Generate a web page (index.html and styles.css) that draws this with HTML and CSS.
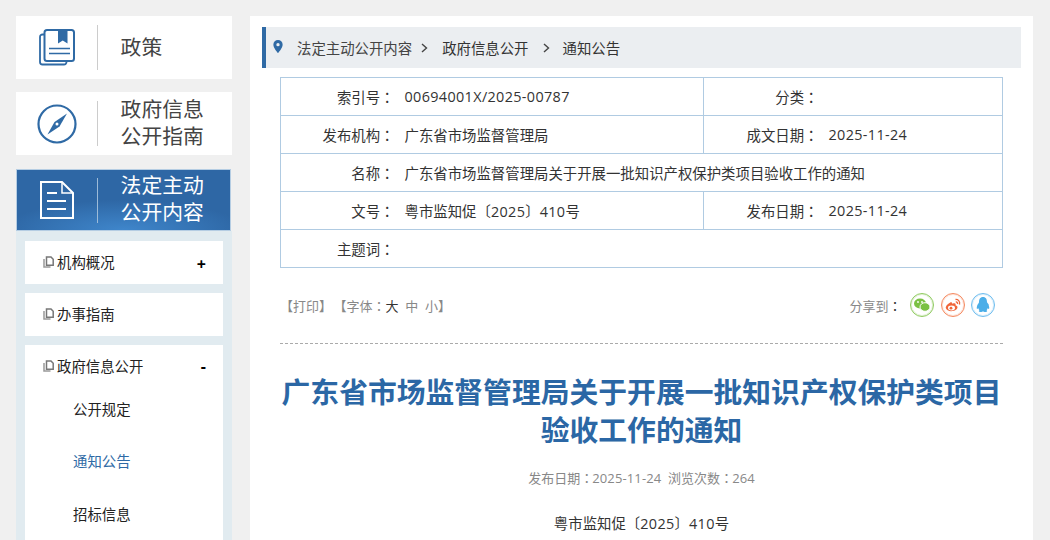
FILE: index.html
```html
<!DOCTYPE html>
<html lang="zh-CN">
<head>
<meta charset="utf-8">
<title>通知公告</title>
<link rel="stylesheet" href="styles.css">
</head>
<body>
<div class="page">
  <aside class="side">
    <a class="tab">
      <span class="tab-icon">
        <svg width="38" height="38" viewBox="0 0 38 38" fill="none" stroke="#2f6aa5" stroke-width="1.800"><path d="M6 5.500H4.500A2.500 2.500 0 0 0 2 8v25a2.500 2.500 0 0 0 2.500 2.500H26a2.500 2.500 0 0 0 2.500-2.500"/><rect x="6.500" y="1" width="29.500" height="31" rx="2.500" stroke-width="2"/><path d="M20 1h9.500v13.500l-4.750-3-4.750 3z" fill="#2f6aa5" stroke="none"/><path d="M11 19.500h21M11 24.500h21" stroke-width="1.500"/></svg>
      </span>
      <span class="tab-text">政策</span>
    </a>
    <a class="tab">
      <span class="tab-icon">
        <svg width="40" height="40" viewBox="0 0 40 40" fill="none"><circle cx="20" cy="20" r="18.500" stroke="#2f6aa5" stroke-width="2.200"/><path d="M30 9.500 22.500 22.500 10.500 30.500 17.500 18z" fill="#2f6aa5"/><circle cx="20" cy="20" r="1.500" fill="#fff"/></svg>
      </span>
      <span class="tab-text">政府信息<br>公开指南</span>
    </a>
    <a class="tab tab-on">
      <span class="tab-icon">
        <svg width="34" height="38" viewBox="0 0 34 38" fill="none" stroke="#fff" stroke-width="2"><path d="M1 1h21l11 11v25H1z"/><path d="M22 1v11h11" stroke-width="1.500"/><path d="M7 12h10M7 20h19M7 28h19" stroke-width="2.200"/></svg>
      </span>
      <span class="tab-text">法定主动<br>公开内容</span>
    </a>
    <div class="menu">
      <div class="menu-item">
        <svg class="doc" width="11" height="12" viewBox="0 0 11 12" fill="none" stroke="#777" stroke-width="1.500"><path d="M3.500 1h4.500l2.200 2.200v6H3.500z"/><path d="M1 3v8h6.500" stroke="#999"/></svg>
        <span class="menu-label">机构概况</span><b class="sign sign-plus">+</b>
      </div>
      <div class="menu-item">
        <svg class="doc" width="11" height="12" viewBox="0 0 11 12" fill="none" stroke="#777" stroke-width="1.500"><path d="M3.500 1h4.500l2.200 2.200v6H3.500z"/><path d="M1 3v8h6.500" stroke="#999"/></svg>
        <span class="menu-label">办事指南</span>
      </div>
      <div class="menu-open">
        <div class="menu-item menu-head">
          <svg class="doc" width="11" height="12" viewBox="0 0 11 12" fill="none" stroke="#777" stroke-width="1.500"><path d="M3.500 1h4.500l2.200 2.200v6H3.500z"/><path d="M1 3v8h6.500" stroke="#999"/></svg>
          <span class="menu-label">政府信息公开</span><b class="sign">-</b>
        </div>
        <a class="sub">公开规定</a>
        <a class="sub sub-on">通知公告</a>
        <a class="sub">招标信息</a>
      </div>
    </div>
  </aside>
  <main class="main">
    <nav class="crumb">
      <svg class="pin" width="10" height="13" viewBox="0 0 10 14"><path fill-rule="evenodd" fill="#2f6aa5" d="M5 0a5 5 0 0 1 5 5c0 3.500-5 9-5 9S0 8.500 0 5a5 5 0 0 1 5-5zm0 3.200a1.800 1.800 0 1 0 0 3.600 1.800 1.800 0 0 0 0-3.600z"/></svg>
      <span class="crumb-first">法定主动公开内容</span>
      <svg class="chev" width="7" height="10" viewBox="0 0 7 10" fill="none" stroke="#444" stroke-width="1.400"><path d="M1 1l4.500 4L1 9"/></svg>
      <span class="crumb-second">政府信息公开</span>
      <svg class="chev chev-last" width="7" height="10" viewBox="0 0 7 10" fill="none" stroke="#444" stroke-width="1.400"><path d="M1 1l4.500 4L1 9"/></svg>
      <span class="crumb-last">通知公告</span>
    </nav>
    <div class="article">
      <table class="meta">
        <colgroup><col class="c1"><col class="c2"><col class="c3"><col class="c4"></colgroup>
        <tr><th>索引号<span class="pct">：</span></th><td><span class="num">00694001X/2025-00787</span></td><th>分类<span class="pct">：</span></th><td></td></tr>
        <tr><th>发布机构<span class="pct">：</span></th><td>广东省市场监督管理局</td><th>成文日期<span class="pct">：</span></th><td><span class="num">2025-11-24</span></td></tr>
        <tr><th>名称<span class="pct">：</span></th><td colspan="3">广东省市场监督管理局关于开展一批知识产权保护类项目验收工作的通知</td></tr>
        <tr><th>文号<span class="pct">：</span></th><td>粤市监知促<span class="pct">〔</span><span class="num">2025</span><span class="pct">〕</span><span class="num">410</span>号</td><th>发布日期<span class="pct">：</span></th><td><span class="num">2025-11-24</span></td></tr>
        <tr><th>主题词<span class="pct">：</span></th><td colspan="3"></td></tr>
      </table>
      <div class="tools">
        <div class="tools-left">【打印】 <span class="font-tool">【字体<span class="pct">：</span><span class="dark">大</span>&nbsp; 中&nbsp; 小】</span></div>
        <div class="share">
          <span class="share-label">分享到<span class="pct dark">：</span></span>
          <span class="round round-green"><svg width="16" height="14" viewBox="0 0 16 14"><ellipse cx="6" cy="5.500" rx="6" ry="5" fill="#7ac143"/><ellipse cx="11" cy="9" rx="5" ry="4.300" fill="#7ac143" stroke="#fff" stroke-width="1"/><circle cx="4" cy="4" r=".9" fill="#fff"/><circle cx="8" cy="4" r=".9" fill="#fff"/></svg></span>
          <span class="round round-red"><svg width="16" height="14" viewBox="0 0 16 14" fill="none"><path d="M6.500 4C3 5.500.5 8 .8 10c.4 2.500 4 3.500 7 3 3-.5 5-2.300 4.700-4-.2-1.300-1.600-1.500-2-1.700.5-1.500-.2-2.500-2-2-.7.200-1.500.5-1.500.5s.3-1.800-1.500-1.800z" fill="#f0653a"/><ellipse cx="6.500" cy="10" rx="3.500" ry="2.400" fill="#fff"/><circle cx="6" cy="10.200" r="1.400" fill="#f0653a"/><path d="M10.500 1.500c2.500-.3 4.800 1.800 4 5M10.800 4c1.200-.2 2 .8 1.700 2" stroke="#f0653a" stroke-width="1.300"/></svg></span>
          <span class="round round-blue"><svg width="14" height="16" viewBox="0 0 14 16"><path d="M7 0C4 0 3 2.500 3 5c0 1-1 1.500-1.800 3.500C.5 10.500.7 12 1.200 12c.4 0 1-1 1-1s.3 1.500 1.300 2.200C2.500 13.700 2.300 15 4.500 15c1.300 0 2-.6 2.500-.6s1.200.6 2.500.6c2.200 0 2-1.300 1-1.800 1-.7 1.300-2.200 1.300-2.200s.6 1 1 1c.5 0 .7-1.500 0-3.500C13 6.500 11 6 11 5c0-2.500-1-5-4-5z" fill="#4baee8"/></svg></span>
        </div>
      </div>
      <h1 class="title">广东省市场监督管理局关于开展一批知识产权保护类项目验收工作的通知</h1>
      <p class="info">发布日期<span class="pct">：</span><span class="num">2025-11-24</span>&nbsp; 浏览次数<span class="pct">：</span><span class="num">264</span></p>
      <p class="docno">粤市监知促<span class="pct">〔</span><span class="num">2025</span><span class="pct">〕</span><span class="num">410</span>号</p>
    </div>
  </main>
</div>
</body>
</html>
```
FILE: styles.css
```css
* { box-sizing: border-box; }
html, body { margin: 0; height: 540px; overflow: hidden; }
body { background: #f0f0f0; color: #333; font-family: "Open Sans", "Noto Sans CJK SC", sans-serif; font-size: 14.400px; }
.pct { font-family: "Noto Sans CJK TC", sans-serif; font-feature-settings: "locl" 0; }
.num { letter-spacing: .025em; }
.page { display: flex; align-items: flex-start; padding: 16px 0 0 16px; }
.side { width: 216px; flex: none; }
.tab { display: flex; align-items: center; height: 63px; background: #fff; margin-bottom: 13px; }
.tab-icon { width: 82px; height: 45px; display: flex; align-items: center; justify-content: center; border-right: 1px solid #ccc; flex: none; padding-left: 1px; }
.tab-text { padding-left: 22.600px; font-size: 20.800px; line-height: 27px; color: #444; margin-top: -1px; }
.tab-on { height: 62px; width: 215px; margin: 14px 0 0; background: radial-gradient(ellipse 120px 30px at 50% 100%, #3f86cb, #2e67a5 100%); border: 1px solid #b5cde3; }
.tab-on .tab-icon { width: 81px; border-right-color: #9dbbd8; padding-left: 0; }
.tab-on .tab-text { color: #fff; margin-top: -2px; }
.menu { background: #e1ebf0; padding: 10px 9px 0; height: 320px; }
.menu-item { display: flex; align-items: center; height: 43px; background: #fff; margin-bottom: 9px; padding: 0 17px 2px 18px; color: #222; }
.doc { flex: none; margin-right: 3px; }
.menu-label { flex: 1; }
.sign { font-size: 16px; color: #000; }
.sign-plus { margin-top: 4px; }
.menu-open { background: #fff; height: 210px; }
.menu-head { margin-bottom: 0; }
.sub { display: block; height: 52.400px; line-height: 44px; padding-left: 48px; color: #222; }
.sub-on { color: #2f6aa5; }
.main { width: 783px; height: 524px; margin-left: 18px; background: #fff; padding: 11px 12px 0; flex: none; }
.crumb { display: flex; align-items: center; height: 41px; background: #ebeef1; border-left: 4px solid #2f6aa5; padding: 0 0 0 7px; color: #444; }
.pin { flex: none; margin: -2px 14px 0 0; }
.chev { flex: none; margin: 0 14px 0 9px; }
.chev-last { margin: 0 13px 0 14px; }
.crumb-second, .crumb-last { color: #333; }
.article { padding: 9px 18px 0; }
.meta { width: 723px; border-collapse: collapse; table-layout: fixed; color: #333; }
.c1 { width: 116px; }
.c2 { width: 307px; }
.c3 { width: 117px; }
.meta th, .meta td { height: 38px; padding: 0; border: 1px solid #b0cbe2; font-weight: 400; }
.meta th { text-align: right; padding-right: 2px; border-right: 0; }
.meta td { text-align: left; padding-left: 8px; border-left: 0; }
.tools { display: flex; justify-content: space-between; align-items: center; height: 76px; border-bottom: 1px dashed #aaa; width: 723px; padding: 0 8px 1px 0; color: #888; font-size: 13px; }
.font-tool { margin-left: -2px; }
.dark { color: #333; }
.share { display: flex; align-items: center; gap: 6.500px; }
.share-label { margin-right: 2px; }
.round { width: 24px; height: 24px; border-radius: 50%; display: flex; align-items: center; justify-content: center; border: 1px solid; background: #fff; }
.round-green { border-color: #8fcb60; box-shadow: inset 0 0 0 1px #e4f2d8; }
.round-red { border-color: #f5895f; box-shadow: inset 0 0 0 1px #fde5dc; }
.round-blue { border-color: #6dbdef; box-shadow: inset 0 0 0 1px #dff0fb; }
.title { margin: 29px 0 0; width: 723px; text-align: center; font-size: 28.800px; line-height: 38px; font-weight: 700; color: #2b67a5; }
.info { margin: 20px 0 0; text-align: center; width: 723px; font-size: 13px; line-height: 18px; color: #888; }
.info .pct { letter-spacing: -1px; }
.info .num { letter-spacing: .01em; }
.docno { margin: 27px 0 0; text-align: center; width: 723px; line-height: 18px; color: #333; }
```
